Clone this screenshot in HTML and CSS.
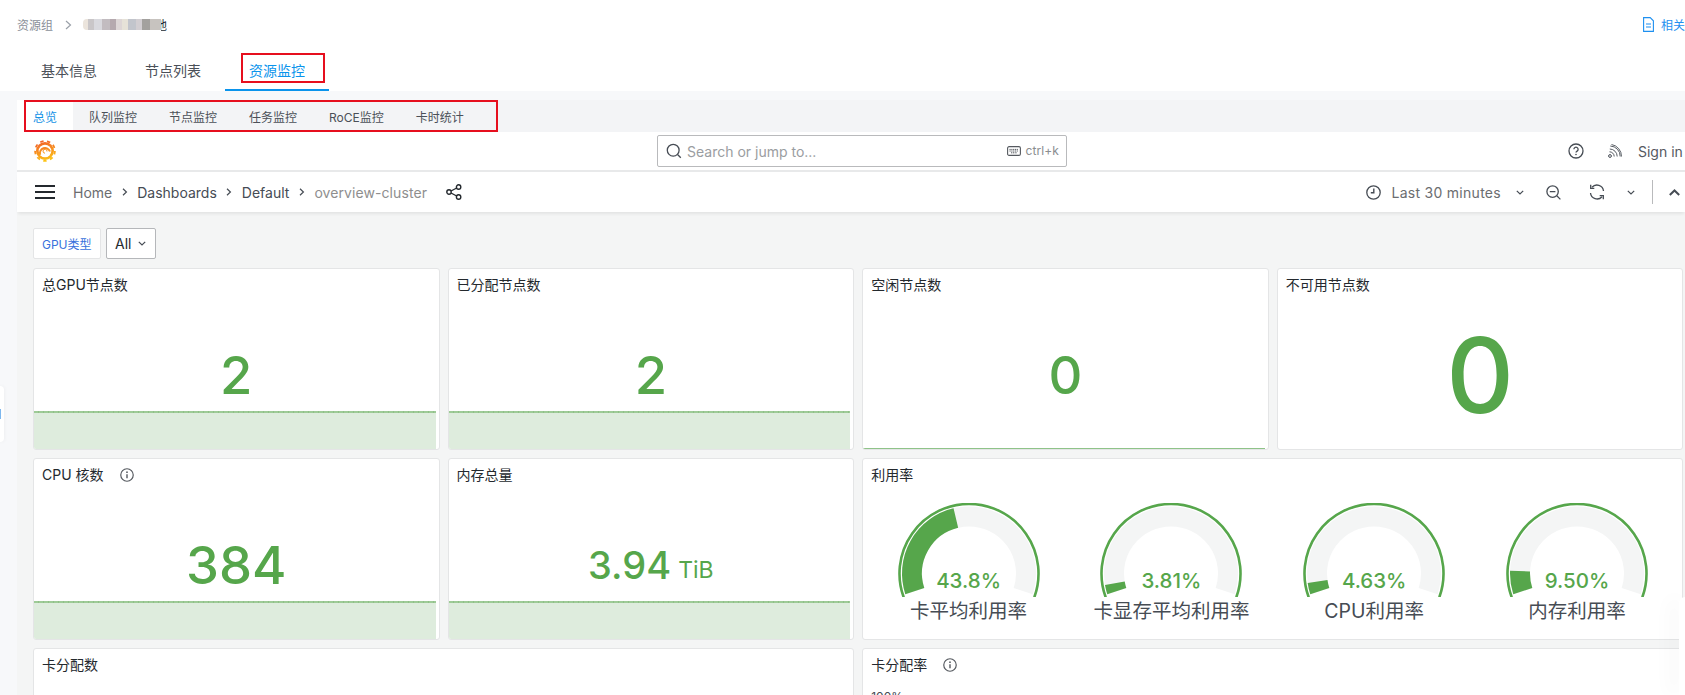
FILE: index.html
```html
<!DOCTYPE html>
<html lang="zh-CN">
<head>
<meta charset="utf-8">
<title>资源监控</title>
<link rel="stylesheet" href="styles.css">
</head>
<body>
<header class="app-header">
  <div class="crumbs">
    <div class="crumb-left">
      <span>资源组</span>
      <svg class="crumb-sep" width="7" height="10" viewBox="0 0 7 10"><path d="M1 1l4.500 4-4.500 4" fill="none" stroke="#9aa0a8" stroke-width="1.200"/></svg>
      <span class="mosaic"></span><span class="crumb-end">地</span>
    </div>
    <a class="doc-link">
      <svg width="11" height="15" viewBox="0 0 11 15"><path d="M.6.600h6.600l3.200 3.200v10.600H.6zM3 7h5M3 10h5" fill="none" stroke="#1e90f0" stroke-width="1.100"/></svg>
      <span>相关文档</span>
    </a>
  </div>
  <nav class="tabs">
    <a class="tab">基本信息</a>
    <a class="tab">节点列表</a>
    <a class="tab tab-active">资源监控</a>
  </nav>
</header>

<main class="content">
  <nav class="subtabs">
    <a class="subtab subtab-active">总览</a>
    <a class="subtab">队列监控</a>
    <a class="subtab">节点监控</a>
    <a class="subtab">任务监控</a>
    <a class="subtab">RoCE监控</a>
    <a class="subtab">卡时统计</a>
  </nav>

  <section class="grafana">
    <div class="gf-top">
      <svg class="gf-logo" width="24" height="24" viewBox="0 0 24 24">
        <defs><linearGradient id="gfu" gradientUnits="userSpaceOnUse" x1="6" y1="1" x2="12" y2="23"><stop offset="0" stop-color="#f1582a"/><stop offset=".55" stop-color="#f79420"/><stop offset="1" stop-color="#fdc814"/></linearGradient></defs>
        <circle cx="12" cy="12" r="9" fill="url(#gfu)"/>
        <circle cx="12" cy="12" r="9.900" fill="none" stroke="url(#gfu)" stroke-width="1.800" stroke-dasharray="3.400 3.510"/>
        <circle cx="12" cy="12" r="6.300" fill="#fff"/>
        <path d="M7.200 15.900A5 5 0 1 1 17 12.500" fill="none" stroke="url(#gfu)" stroke-width="2"/>
        <path d="M14 12.500a2 2 0 1 0-2 1.700" fill="none" stroke="url(#gfu)" stroke-width="1"/>
      </svg>
      <div class="search">
        <svg width="16" height="16" viewBox="0 0 16 16"><circle cx="7.200" cy="7.200" r="5.900" fill="none" stroke="#464c54" stroke-width="1.300"/><path d="M11.500 11.500l3.300 3.300" stroke="#464c54" stroke-width="1.300"/></svg>
        <span class="search-text">Search or jump to...</span>
        <svg class="kbd" width="14" height="10" viewBox="0 0 14 10"><rect x=".6" y=".6" width="12.800" height="8.800" rx="1.500" fill="none" stroke="#55595f" stroke-width="1.100"/><path d="M2.500 3.400h9M2.500 5h9M4 6.800h6" stroke="#55595f" stroke-width="1" stroke-dasharray="1.200 .6"/></svg>
        <span class="kbd-text">ctrl+k</span>
      </div>
      <div class="gf-top-right">
        <svg width="16" height="16" viewBox="0 0 16 16"><circle cx="8" cy="8" r="7" fill="none" stroke="#464c54" stroke-width="1.300"/><path d="M5.900 6.300a2.100 2.100 0 1 1 3.200 1.800c-.8.500-1.100.8-1.100 1.500" fill="none" stroke="#464c54" stroke-width="1.300"/><circle cx="8" cy="11.500" r=".8" fill="#464c54"/></svg>
        <svg class="rss" width="14" height="14" viewBox="0 0 14 14"><circle cx="2" cy="12" r="1.400" fill="none" stroke="#464c54" stroke-width="1"/><path d="M1.500 7.800a4.700 4.700 0 0 1 4.700 4.700M1.800 5a7.500 7.500 0 0 1 7.400 7.500M2.300 2a10.300 10.300 0 0 1 9.900 10.500M3.500.5a12 12 0 0 1 10 12" fill="none" stroke="#464c54" stroke-width=".9"/></svg>
        <span class="signin">Sign in</span>
      </div>
    </div>

    <div class="gf-nav">
      <svg class="burger" width="20" height="14" viewBox="0 0 20 14"><path d="M0 1h20M0 7h20M0 13h20" stroke="#24292e" stroke-width="2"/></svg>
      <ol class="gf-path">
        <li class="path-home">Home</li>
        <li class="path-sep"><svg width="6" height="8" viewBox="0 0 6 8"><path d="M1 .8L4.400 4 1 7.200" fill="none" stroke="#464c54" stroke-width="1.200"/></svg></li>
        <li>Dashboards</li>
        <li class="path-sep"><svg width="6" height="8" viewBox="0 0 6 8"><path d="M1 .8L4.400 4 1 7.200" fill="none" stroke="#464c54" stroke-width="1.200"/></svg></li>
        <li>Default</li>
        <li class="path-sep"><svg width="6" height="8" viewBox="0 0 6 8"><path d="M1 .8L4.400 4 1 7.200" fill="none" stroke="#464c54" stroke-width="1.200"/></svg></li>
        <li class="path-current">overview-cluster</li>
      </ol>
      <svg class="share" width="16" height="16" viewBox="0 0 16 16"><g fill="none" stroke="#24292e" stroke-width="1.400"><circle cx="3" cy="8" r="2.200"/><circle cx="12.600" cy="3" r="2.200"/><circle cx="12.600" cy="13" r="2.200"/><path d="M5 7l5.700-3M5 9l5.700 3"/></g></svg>
      <div class="gf-nav-right">
        <svg width="15" height="15" viewBox="0 0 15 15"><circle cx="7.500" cy="7.500" r="6.700" fill="none" stroke="#464c54" stroke-width="1.300"/><path d="M7.800 3.500v4.300H4.800" fill="none" stroke="#464c54" stroke-width="1.400"/></svg>
        <span class="time-range">Last 30 minutes</span>
        <svg class="chev" width="8" height="5" viewBox="0 0 8 5"><path d="M.8.800L4 4 7.200.8" fill="none" stroke="#464c54" stroke-width="1.200"/></svg>
        <svg class="zoomout" width="15" height="15" viewBox="0 0 15 15"><circle cx="6.600" cy="6.600" r="5.700" fill="none" stroke="#464c54" stroke-width="1.300"/><path d="M3.800 6.600h5.600M10.800 10.800l3.600 3.600" stroke="#464c54" stroke-width="1.300"/></svg>
        <svg class="refresh" width="16" height="16" viewBox="0 0 16 16"><path d="M3 3.300A6.600 6.600 0 0 1 14.500 7M13 12.700A6.600 6.600 0 0 1 1.500 9" fill="none" stroke="#464c54" stroke-width="1.300"/><path d="M1.700 .8v3.600h3.600M14.300 15.200v-3.600h-3.600" fill="none" stroke="#464c54" stroke-width="1.300"/></svg>
        <svg class="chev chev-refresh" width="8" height="5" viewBox="0 0 8 5"><path d="M.8.800L4 4 7.200.8" fill="none" stroke="#464c54" stroke-width="1.200"/></svg>
        <span class="nav-divider"></span>
        <svg class="chev-up" width="11" height="7" viewBox="0 0 11 7"><path d="M.8 6L5.500 1.500 10.200 6" fill="none" stroke="#464c54" stroke-width="2"/></svg>
      </div>
    </div>

    <div class="dashboard">
      <div class="vars">
        <span class="var-label">GPU类型</span>
        <span class="var-select">All<svg width="8" height="5" viewBox="0 0 8 5"><path d="M.8.800L4 4 7.200.8" fill="none" stroke="#464c54" stroke-width="1.200"/></svg></span>
      </div>

      <div class="panels">
        <article class="panel">
          <h3 class="panel-title">总GPU节点数</h3>
          <div class="spark"></div>
          <div class="stat stat-m">2</div>
        </article>
        <article class="panel">
          <h3 class="panel-title">已分配节点数</h3>
          <div class="spark"></div>
          <div class="stat stat-m">2</div>
        </article>
        <article class="panel">
          <h3 class="panel-title">空闲节点数</h3>
          <div class="spark spark-flat"></div>
          <div class="stat stat-m">0</div>
        </article>
        <article class="panel">
          <h3 class="panel-title">不可用节点数</h3>
          <div class="stat stat-xl">0</div>
        </article>

        <article class="panel">
          <h3 class="panel-title">CPU 核数
            <svg class="info" width="14" height="14" viewBox="0 0 13 13"><circle cx="6.500" cy="6.500" r="5.800" fill="none" stroke="#55595f" stroke-width="1.100"/><path d="M6.500 5.800v3.700" stroke="#55595f" stroke-width="1.300"/><circle cx="6.500" cy="3.900" r=".8" fill="#55595f"/></svg>
          </h3>
          <div class="spark"></div>
          <div class="stat stat-m">384</div>
        </article>
        <article class="panel">
          <h3 class="panel-title">内存总量</h3>
          <div class="spark"></div>
          <div class="stat stat-s">3.94<span class="unit">TiB</span></div>
        </article>
        <article class="panel panel-wide">
          <h3 class="panel-title">利用率</h3>
          <div class="gauges">
            <div class="gauge">
              <svg class="gauge-arc" width="150" height="94" viewBox="0 0 150 94"><path class="arc-ring" d="M9.690 94.270A69.500 69.500 0 1 1 140.310 94.270"/><path class="arc-track" d="M20.790 88.110A57 57 0 1 1 129.210 88.110"/><path class="arc-value" pathLength="100" stroke-dasharray="43.8 100" d="M20.790 88.110A57 57 0 1 1 129.210 88.110"/></svg>
              <span class="gauge-value">43.8%</span>
              <span class="gauge-label">卡平均利用率</span>
            </div>
            <div class="gauge">
              <svg class="gauge-arc" width="150" height="94" viewBox="0 0 150 94"><path class="arc-ring" d="M9.690 94.270A69.500 69.500 0 1 1 140.310 94.270"/><path class="arc-track" d="M20.790 88.110A57 57 0 1 1 129.210 88.110"/><path class="arc-value" pathLength="100" stroke-dasharray="3.81 100" d="M20.790 88.110A57 57 0 1 1 129.210 88.110"/></svg>
              <span class="gauge-value">3.81%</span>
              <span class="gauge-label">卡显存平均利用率</span>
            </div>
            <div class="gauge">
              <svg class="gauge-arc" width="150" height="94" viewBox="0 0 150 94"><path class="arc-ring" d="M9.690 94.270A69.500 69.500 0 1 1 140.310 94.270"/><path class="arc-track" d="M20.790 88.110A57 57 0 1 1 129.210 88.110"/><path class="arc-value" pathLength="100" stroke-dasharray="4.63 100" d="M20.790 88.110A57 57 0 1 1 129.210 88.110"/></svg>
              <span class="gauge-value">4.63%</span>
              <span class="gauge-label">CPU利用率</span>
            </div>
            <div class="gauge">
              <svg class="gauge-arc" width="150" height="94" viewBox="0 0 150 94"><path class="arc-ring" d="M9.690 94.270A69.500 69.500 0 1 1 140.310 94.270"/><path class="arc-track" d="M20.790 88.110A57 57 0 1 1 129.210 88.110"/><path class="arc-value" pathLength="100" stroke-dasharray="9.5 100" d="M20.790 88.110A57 57 0 1 1 129.210 88.110"/></svg>
              <span class="gauge-value">9.50%</span>
              <span class="gauge-label">内存利用率</span>
            </div>
          </div>
        </article>

        <article class="panel panel-wide">
          <h3 class="panel-title">卡分配数</h3>
        </article>
        <article class="panel panel-wide">
          <h3 class="panel-title">卡分配率
            <svg class="info" width="14" height="14" viewBox="0 0 13 13"><circle cx="6.500" cy="6.500" r="5.800" fill="none" stroke="#55595f" stroke-width="1.100"/><path d="M6.500 5.800v3.700" stroke="#55595f" stroke-width="1.300"/><circle cx="6.500" cy="3.900" r=".8" fill="#55595f"/></svg>
          </h3>
          <div class="axis-label">100%</div>
        </article>
      </div>
    </div>
  </section>
</main>

<div class="mark mark-tab"></div>
<div class="mark mark-subtabs"></div>
<div class="side-handle"><span></span></div>
<div class="float-edge"></div>
</body>
</html>
```

FILE: styles.css
```css
* { box-sizing: border-box; }

html, body {
  margin: 0;
  height: 695px;
  overflow: hidden;
}

body {
  position: relative;
  background: #f7f8fa;
  color: #24292e;
  font-family: Inter, "Noto Sans CJK SC", sans-serif;
  font-size: 14px;
}

/* App header */
.app-header {
  height: 91px;
  padding-left: 17px;
  background: #fff;
}

.crumbs {
  display: flex;
  align-items: center;
  justify-content: space-between;
  height: 50px;
  padding-bottom: 1px;
  margin-right: -24px;
  font-size: 12px;
  color: #8a8f99;
}

.crumb-left {
  display: flex;
  align-items: center;
}

.crumb-sep { margin-left: 12px; }

.mosaic {
  width: 78px;
  height: 11px;
  margin-left: 11px;
  border-radius: 4px 0 0 4px;
  filter: blur(.6px);
  background: linear-gradient(90deg,
    #ebe4dc 0 6%, #c9c6c8 6% 14%, #d9d9de 14% 24%, #c2bcc0 24% 34%, #b5a9ae 34% 42%,
    #ddd6d6 42% 50%, #e6e2d8 50% 58%, #c2c5cc 58% 68%, #d2ced2 68% 76%, #a3a19e 76% 86%, #c7c3bf 86% 100%);
}

.crumb-end {
  width: 6px;
  overflow: hidden;
  color: #24292e;
  direction: rtl;
}

.doc-link {
  display: flex;
  align-items: center;
  gap: 7px;
  color: #1e90f0;
}

.tabs {
  display: flex;
  height: 41px;
}

.tab {
  display: flex;
  align-items: center;
  padding: 0 24px;
  color: #4b5058;
  border-bottom: 2px solid transparent;
}

.tab-active {
  color: #0a94ec;
  border-bottom-color: #0a94ec;
}

/* Content */
.content { padding: 9px 0 0 17px; }

.subtabs {
  display: flex;
  height: 32px;
  font-size: 12px;
  color: #4b5058;
  background: #f3f4f6;
  border-radius: 4px 0 0 0;
}

.subtab {
  display: flex;
  align-items: center;
  padding: 0 16px;
}

.subtab-active {
  color: #1492e6;
  background: #fff;
}

/* Grafana top bar */
.grafana { background: #f4f5f5; }

.gf-top {
  display: grid;
  grid-template-columns: 640px 410px 1fr;
  align-items: center;
  height: 40px;
  background: #fff;
  border-bottom: 2px solid #e8e9ea;
}

.gf-logo {
  margin-left: 16px;
}

.search {
  display: flex;
  align-items: center;
  height: 32px;
  margin-top: -1px;
  padding: 0 7px 0 8px;
  background: #fff;
  border: 1px solid #b9babc;
  border-radius: 2px;
}

.search-text {
  margin-left: 5px;
  padding-top: 1px;
  color: #9a9da1;
}

.kbd { margin-left: auto; }

.kbd-text {
  margin-left: 4px;
  font-size: 12px;
  color: #8a8d90;
  letter-spacing: .1px;
}

.gf-top-right {
  display: flex;
  align-items: center;
  padding-left: 501px;
}

.rss { margin-left: 24px; }

.signin {
  margin-left: 16px;
  color: #55595f;
  white-space: nowrap;
}

/* Grafana nav */
.gf-nav {
  position: relative;
  display: flex;
  align-items: center;
  height: 40px;
  padding-left: 18px;
  background: #fff;
  box-shadow: 0 3px 3px -1px rgba(0, 0, 0, .07);
}

.gf-path {
  display: flex;
  align-items: center;
  margin: 0 0 0 18px;
  padding: 0;
  list-style: none;
  color: #464c54;
}

.path-sep {
  display: flex;
  width: 25px;
  justify-content: center;
}

.path-home { color: #6b6d70; }
.path-current { color: #8e8e8e; letter-spacing: .08px; }

.share { margin-left: 19px; }

.gf-nav-right {
  display: flex;
  align-items: center;
  margin-left: auto;
  padding-right: 5px;
  color: #6b6d70;
}

.time-range {
  margin-left: 10px;
  letter-spacing: .28px;
  white-space: nowrap;
}

.chev { margin-left: 15px; }
.zoomout { margin-left: 22px; }
.refresh { margin-left: 28px; }
.chev-refresh { margin-left: 22px; }

.nav-divider {
  width: 1px;
  height: 24px;
  margin-left: 17px;
  background: #b9babc;
}

.chev-up { margin-left: 16px; }

/* Dashboard */
.dashboard {
  padding: 16px 0 0 16px;
}

.vars {
  display: flex;
  gap: 5px;
  height: 31px;
  margin-bottom: 9px;
}

.var-label {
  display: flex;
  align-items: center;
  padding: 0 8px;
  width: 68px;
  font-size: 12px;
  color: #3871dc;
  background: #fff;
  border: 1px solid #e4e5e6;
  border-radius: 2px;
}

.var-select {
  display: flex;
  align-items: center;
  gap: 7px;
  width: 50px;
  padding-left: 8px;
  color: #24292e;
  background: #fff;
  border: 1px solid #b5b7ba;
  border-radius: 2px;
}

.panels {
  display: grid;
  grid-template-columns: repeat(4, 406.5px);
  grid-auto-rows: 182px;
  column-gap: 8.1px;
  row-gap: 8px;
}

.panel {
  position: relative;
  display: flex;
  flex-direction: column;
  min-width: 0;
  overflow: hidden;
  background: #fff;
  border: 1px solid #e4e5e6;
  border-radius: 3px;
}

.panel-wide { grid-column: span 2; }

.panel-title {
  display: flex;
  align-items: center;
  flex: none;
  height: 33px;
  margin: 0;
  padding: 0 0 4px 8px;
  font-size: 14px;
  font-weight: 400;
  color: #24292e;
}

.info {
  margin: 3px 0 0 16px;
}

.spark {
  position: absolute;
  left: 0;
  right: 3px;
  bottom: 0;
  height: 38px;
  background: #deecdd;
  border-top: 2px solid #9ecb97;
}

.spark::before {
  content: "";
  position: absolute;
  left: 0;
  right: 0;
  top: -2px;
  height: 2px;
  background: repeating-linear-gradient(90deg, transparent 0 4px, rgba(80, 140, 70, .18) 4px 5px);
}

.spark-flat {
  height: 1px;
  bottom: 0;
  background: none;
  border-top: 1px solid #8fc389;
}

.spark-flat::before { display: none; }

.stat {
  position: relative;
  display: flex;
  flex: 1;
  align-items: center;
  justify-content: center;
  color: #56a64b;
  font-weight: 500;
  line-height: 1;
}

.stat-m { font-size: 52.5px; }
.stat-s { font-size: 38px; padding-bottom: 1px; }
.stat-xl { font-size: 105px; padding-bottom: 2px; }

.unit {
  align-self: center;
  margin-left: 7px;
  margin-top: 10px;
  font-size: 23px;
  font-weight: 400;
}

/* Gauges */
.gauges {
  display: flex;
  padding: 11px 0 0 4px;
}

.gauge {
  position: relative;
  display: flex;
  flex-direction: column;
  align-items: center;
  flex: 0 0 202.8px;
}

.gauge-arc { display: block; }

.arc-ring, .arc-track, .arc-value { fill: none; }
.arc-ring { stroke: #56a64b; stroke-width: 2.600; }
.arc-track { stroke: #f4f5f5; stroke-width: 20; }
.arc-value { stroke: #56a64b; stroke-width: 20; }

.gauge-value {
  position: absolute;
  top: 66px;
  left: 0;
  right: 0;
  text-align: center;
  font-size: 20.500px;
  font-weight: 500;
  line-height: 24px;
  color: #56a64b;
}

.gauge-label {
  margin-top: 2px;
  font-size: 19.500px;
  line-height: 24px;
  color: #464c54;
  white-space: nowrap;
}

.axis-label {
  padding: 8px 0 0 8px;
  font-size: 12px;
  line-height: 14px;
  color: #464c54;
}

/* Annotation rectangles and floating edges */
.mark {
  position: absolute;
  border: 2px solid #e60f1e;
  pointer-events: none;
}

.mark-tab {
  left: 241px;
  top: 53px;
  width: 84px;
  height: 30px;
}

.mark-subtabs {
  left: 24px;
  top: 100px;
  width: 474px;
  height: 32px;
}

.side-handle {
  position: absolute;
  left: 0;
  top: 386px;
  width: 4px;
  height: 56px;
  background: #fff;
  border-radius: 0 6px 6px 0;
  box-shadow: 0 0 4px rgba(0, 0, 0, .06);
}

.side-handle span {
  position: absolute;
  top: 23px;
  left: 0;
  width: 1px;
  height: 10px;
  background: #7db7ee;
}

.float-edge {
  position: absolute;
  right: 0;
  top: 597px;
  width: 6px;
  height: 98px;
  background: #fff;
  border-radius: 8px 0 0 0;
  box-shadow: -8px 0 18px rgba(0, 0, 0, .05);
}
```
